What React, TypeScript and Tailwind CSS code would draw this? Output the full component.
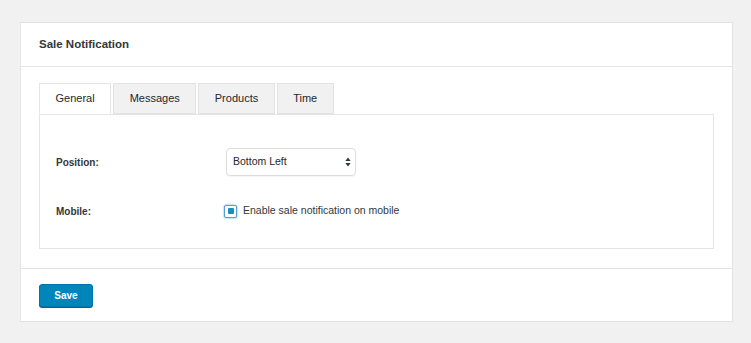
import React from 'react';

const tabs = ['General', 'Messages', 'Products', 'Time'];

const SelectArrows = () => (
  <svg width="6" height="10" viewBox="0 0 6 10" className="shrink-0">
    <path d="M3 0.5 L5.6 4 H0.4 Z" fill="#32373c" />
    <path d="M3 9.5 L5.6 6 H0.4 Z" fill="#32373c" />
  </svg>
);

export default function App() {
  return (
    <div
      className="min-h-[343px] bg-[#f1f1f1] pt-[22px] pl-[20px] pr-[18px] pb-[22px] text-[#23282d]"
      style={{ fontFamily: '"Liberation Sans", Arial, sans-serif' }}
    >
      <div className="w-[713px] border border-[#e2e4e7] bg-white">
        <div className="flex h-[44px] items-center border-b border-[#e2e4e7] px-[18px]">
          <h1 className="text-[11.5px] font-bold text-[#32373c]">Sale Notification</h1>
        </div>

        <div className="px-[18px] pt-[16px] pb-[19px]">
          <div className="flex gap-[2px]">
            {tabs.map((tab, i) => (
              <div
                key={tab}
                className={`relative flex h-[31px] items-center border px-[15.5px] text-[11px] ${
                  i === 0
                    ? 'z-10 -mb-px border-[#e5e5e5] border-b-white bg-white'
                    : 'border-[#e2e2e2] bg-[#f1f1f1]'
                }`}
              >
                {tab}
              </div>
            ))}
          </div>
          <div className="border border-[#e5e5e5] px-[16px] pt-[33px] pb-[29px]">
            <div className="flex h-[28px] items-center">
              <div className="w-[170px] text-[10px] font-bold text-[#32373c]">Position:</div>
              <div className="flex h-[28px] w-[130px] items-center justify-between rounded-[4px] border border-[#dddddd] bg-white pl-[6px] pr-[4px] text-[10.5px] shadow-[0_1px_1px_rgba(0,0,0,0.04)]">
                <span>Bottom Left</span>
                <SelectArrows />
              </div>
            </div>
            <div className="mt-[27px] flex h-[16px] items-center">
              <div className="w-[168px] text-[10px] font-bold text-[#32373c]">Mobile:</div>
              <div className="flex items-center gap-[6px] text-[10.5px] text-[#32373c]">
                <span className="flex h-[13px] w-[13px] items-center justify-center rounded-[2px] border border-[#5b9dd9] bg-white shadow-[0_0_2px_rgba(30,140,190,0.8)]">
                  <span className="h-[6px] w-[6px] rounded-[1px] bg-[#1e8cbe]" />
                </span>
                <span>Enable sale notification on mobile</span>
              </div>
            </div>
          </div>
        </div>

        <div className="border-t border-[#e2e4e7] px-[18px] pt-[15px] pb-[14px]">
          <button className="flex h-[23px] w-[54px] items-center justify-center rounded-[3px] border border-[#0073aa] bg-[#0085ba] text-[10px] font-bold text-white shadow-[0_1px_0_#006799]">
            Save
          </button>
        </div>
      </div>
    </div>
  );
}
